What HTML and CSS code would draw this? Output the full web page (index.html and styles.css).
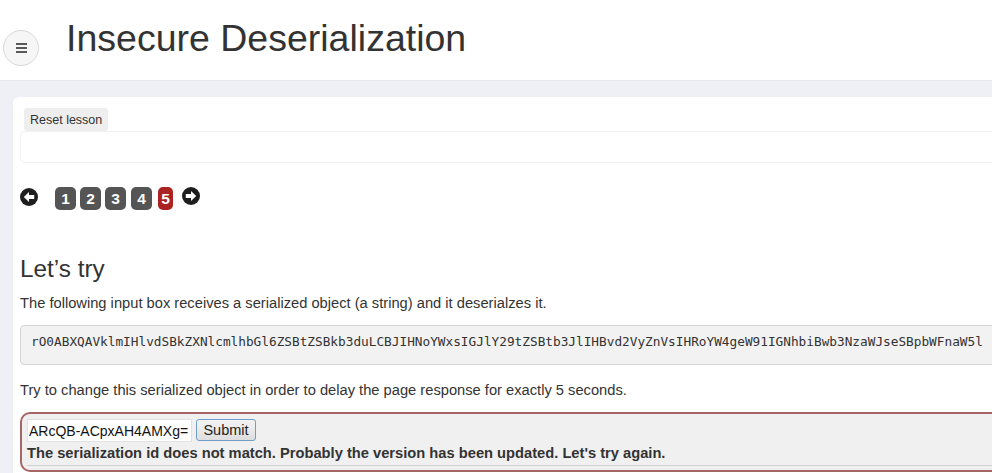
FILE: index.html
```html
<!DOCTYPE html>
<html lang="en">
<head>
<meta charset="utf-8">
<title>Insecure Deserialization</title>
<link rel="stylesheet" href="styles.css">
</head>
<body>
<header class="page-header">
  <button class="menu-toggle" aria-label="Menu">
    <span class="bar"></span><span class="bar"></span><span class="bar"></span>
  </button>
  <h1 class="lesson-title">Insecure Deserialization</h1>
</header>
<main class="main">
  <section class="panel">
    <div class="reset-row"><button class="reset-btn">Reset lesson</button></div>
    <div class="lesson-box"></div>
    <nav class="pager">
      <svg class="arrow arrow-prev" width="18" height="18" viewBox="0 0 18 18"><circle cx="9" cy="9" r="9" fill="#1e1e1e"/><path d="M3.8 9 L9 4 L9 7.1 L14.2 7.1 L14.2 10.9 L9 10.9 L9 14 Z" fill="#fff"/></svg>
      <span class="page">1</span>
      <span class="page">2</span>
      <span class="page">3</span>
      <span class="page">4</span>
      <span class="page current">5</span>
      <svg class="arrow arrow-next" width="18" height="18" viewBox="0 0 18 18"><circle cx="9" cy="9" r="9" fill="#1e1e1e"/><path d="M14.2 9 L9 4 L9 7.1 L3.8 7.1 L3.8 10.9 L9 10.9 L9 14 Z" fill="#fff"/></svg>
    </nav>
    <h2 class="section-title">Let’s try</h2>
    <p class="text">The following input box receives a serialized object (a string) and it deserialzes it.</p>
    <pre class="code">rO0ABXQAVklmIHlvdSBkZXNlcmlhbGl6ZSBtZSBkb3duLCBJIHNoYWxsIGJlY29tZSBtb3JlIHBvd2VyZnVsIHRoYW4geW91IGNhbiBwb3NzaWJseSBpbWFnaW5l</pre>
    <p class="text text-gap">Try to change this serialized object in order to delay the page response for exactly 5 seconds.</p>
    <form class="attack">
      <div class="attack-row">
        <input class="token" type="text" value="ARcQB-ACpxAH4AMXg=">
        <button class="submit" type="button">Submit</button>
      </div>
      <div class="feedback">The serialization id does not match. Probably the version has been updated. Let's try again.</div>
      <div class="rule"></div>
    </form>
  </section>
</main>
</body>
</html>
```
FILE: styles.css
```css
html, body {
  margin: 0;
  padding: 0;
  overflow: hidden;
  height: 100%;
}
body {
  font-family: "Liberation Sans", Arial, sans-serif;
  color: #333;
  background: #fff;
  display: flex;
  flex-direction: column;
}
.page-header {
  height: 80px;
  flex: none;
  border-bottom: 1px solid #e4e6ea;
  display: flex;
  align-items: flex-start;
  background: #fff;
}
.menu-toggle {
  margin: 30px 0 0 3px;
  width: 36px;
  height: 36px;
  border-radius: 50%;
  border: 1px solid #d8d8d8;
  background: #f6f6f6;
  padding: 0;
  display: flex;
  flex-direction: column;
  align-items: center;
  justify-content: center;
  gap: 2px;
  flex: none;
}
.menu-toggle .bar {
  display: block;
  width: 11px;
  height: 2px;
  background: #5a5a5a;
}
.lesson-title {
  margin: 20px 0 0 27px;
  font-size: 37.5px;
  line-height: 1;
  font-weight: normal;
  color: #333;
  white-space: nowrap;
}
.main {
  flex: 1;
  background: #eef0f5;
  padding: 16px 0 0 13px;
}
.panel {
  background: #fff;
  width: 1200px;
  min-height: 100%;
  border-radius: 6px 0 0 0;
  padding: 11px 0 0 7px;
  box-sizing: border-box;
}
.reset-row {
  height: 23px;
  position: relative;
  z-index: 1;
}
.reset-btn {
  margin-left: 4px;
  height: 23px;
  padding: 0 6px;
  border: none;
  border-radius: 3px;
  background: #eeeeee;
  color: #333;
  font-family: "Liberation Sans", Arial, sans-serif;
  font-size: 12.5px;
}
.lesson-box {
  height: 32px;
  box-sizing: border-box;
  border: 1px solid #f1f1f1;
  border-radius: 5px;
}
.pager {
  margin-top: 24px;
  display: flex;
  align-items: flex-start;
  height: 23px;
}
.arrow { display: block; flex: none; }
.arrow-prev { margin: 1px 17px 0 0; }
.arrow-next { margin: 0 0 0 9px; }
.page {
  width: 21px;
  height: 23px;
  border-radius: 5px;
  background: #555;
  color: #fff;
  font-weight: bold;
  font-size: 15.5px;
  line-height: 24px;
  text-align: center;
  margin-right: 4px;
}
.page:nth-of-type(3) { margin-right: 5px; }
.page.current {
  width: 15px;
  background: #ab2222;
  margin-right: 0;
  margin-left: 2px;
}
.section-title {
  margin: 46px 0 12px;
  font-size: 24.3px;
  line-height: 26.4px;
  font-weight: normal;
  color: #333;
}
.text {
  margin: 0;
  font-size: 14.7px;
  line-height: 18.5px;
  color: #333;
  white-space: nowrap;
}
.text-gap { margin-top: 16px; }
.code {
  margin: 12px 0 0;
  padding: 6px 10px 13px;
  border: 1px solid #d4d4d4;
  border-radius: 4px;
  background: #f2f2f2;
  font-family: "DejaVu Sans Mono", "Liberation Mono", monospace;
  font-size: 12.75px;
  line-height: 19px;
  color: #333;
  white-space: pre;
}
.attack {
  margin: 13px 0 0;
  border: 2px solid #a86565;
  border-radius: 10px;
  background: #f0f0f0;
  padding: 5px 0 4px 5px;
}
.attack-row {
  display: flex;
  align-items: flex-start;
  gap: 4px;
}
.token {
  width: 165px;
  height: 23px;
  box-sizing: border-box;
  margin: 0;
  padding: 1px 1px;
  border: 1px solid #e2e2e2;
  background: #fff;
  font-family: "Liberation Sans", Arial, sans-serif;
  font-size: 14px;
  color: #111;
}
.submit {
  width: 60px;
  height: 22px;
  box-sizing: border-box;
  margin: 0;
  padding: 0;
  border: 1px solid #6f9ec9;
  border-radius: 3px;
  background: linear-gradient(#f4f4f4, #dedede);
  font-family: "Liberation Sans", Arial, sans-serif;
  font-size: 14.5px;
  color: #222;
}
.feedback {
  margin-top: 2px;
  font-size: 14.7px;
  line-height: 18.5px;
  font-weight: bold;
  color: #333;
  white-space: nowrap;
}
.rule {
  margin-top: 2px;
  height: 1px;
  background: #d0d0d0;
}
```
